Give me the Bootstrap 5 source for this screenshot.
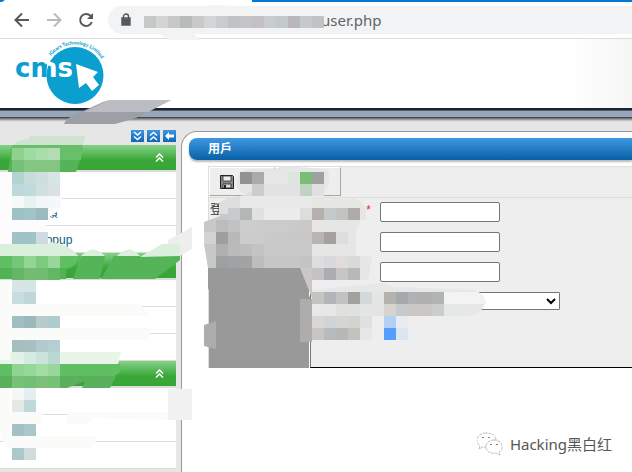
<!DOCTYPE html>
<html lang="zh-Hant">
<head>
<meta charset="utf-8">
<meta name="viewport" content="width=device-width, initial-scale=1">
<title>用戶</title>
<link href="https://cdn.jsdelivr.net/npm/bootstrap@5.3.0/dist/css/bootstrap.min.css" rel="stylesheet">
<style>
body{font:12px/16px "Liberation Sans","Noto Sans CJK TC",sans-serif;background:#e6e6e6;overflow:hidden}
svg{display:block}
.browser{height:39px;border-bottom:1px solid #dadce0;border-top:2px solid #0078d7;padding:4px 0 4px 12px;gap:12px}
.tool{border:0;background:none;padding:0;width:20px;height:20px;color:#55595e}
.tool:disabled{color:#b9bbbe}
.address{height:28px;background:#f1f3f4;border-radius:14px 0 0 14px;padding-left:12px;color:#5f6368}
.address-input{border:0;background:none;outline:0;padding:0 0 0 189px;font:15px/20px "Noto Sans",sans-serif;color:#5f6368;min-width:0}
.brandbar{height:69px;background:linear-gradient(90deg,#fff 90%,#f6f6f6);padding-left:14px}
.band{height:14px;background:linear-gradient(#1d252c 0 2px,#4f5d6d 2px 3px,#98a6bb 3px 9px,#46484b 9px 10px,#77797b 10px 11px,#999 11px 12px,#c0c0c0 12px 13px,#e0e0e0 13px)}
.side{width:176px;padding-top:8px}
.folds{gap:3px}
.fold{width:13px;height:12px;border:0;padding:0;background:linear-gradient(#3c96e2,#1265b5)}
.groups{margin-top:3px;background:#fff}
.group-head{display:flex;width:100%;height:27px;border:0;border-bottom:2px solid #dcdcdc;padding:8px 12px 0 0;background:linear-gradient(#85d18a,#3aa838 55%,#38a536) border-box}
.entry{display:block;height:27px;border-bottom:1px solid #dcdcdc;padding:6px 0 0 39px;color:#0b5e80;text-decoration:none}
.panel{margin:9px 0 0 5px;background:#fff;border:solid #999;border-width:1px 0 0 1px;border-radius:16px 0 0 0;padding:6px 0 0 7px;min-width:0}
.panel-title{height:22px;margin:0;border-radius:8px 0 0 8px;background:linear-gradient(#3f98e3,#0960a6);box-shadow:0 2px 2px #bbb;color:#fff;font:bold 12px/22px "Liberation Sans","Noto Sans CJK TC",sans-serif;padding-left:19px}
.work{margin:6px 0 0 19px;background:#eee;border-left:1px solid #ddd;border-top:1px solid #ddd}
.action{width:66px;height:29px;border:1px solid #fff;border-right-color:#aca899;border-bottom-color:#aca899;background:#eee;padding:0 0 0 9px}
.form-area{border-top:1px solid #ddd;margin-top:1px;height:171px}
.tabs-col{width:101px;background:#999;border-right:1px solid #fff}
.tab-item{height:24px;background:#eee;color:#333;padding:4px 0 0 1px}
.fields{border-left:1px solid #777;border-bottom:1px solid #000;padding:4px 0 0 1px}
.field-row{min-height:20px;margin-bottom:10px}
.field-row label{width:68px;text-align:right;padding-right:9px;color:#f22}
.text-field{width:120px;height:20px;border:1px solid #767676;border-radius:2px;background:#fff;padding:1px 4px}
.pick{width:180px;height:18px;border:1px solid #767676;border-radius:1px;background:#fff;font-size:12px;padding:0}
.redact{position:absolute;left:0;top:0;pointer-events:none}
.watermark{position:absolute;right:20px;bottom:16px;gap:7px;font:15px/24px "Noto Sans","Noto Sans CJK SC",sans-serif;color:#555}
</style>
<script src="https://cdn.jsdelivr.net/npm/bootstrap@5.3.0/dist/js/bootstrap.bundle.min.js"></script>
</head>
<body class="position-relative vh-100 d-flex flex-column">
<svg width="0" height="0" class="position-absolute" aria-hidden="true">
<symbol id="up" viewBox="0 0 9 9"><path d="M1 4.5 4.5 1 8 4.5M1 8.500 4.500 5 8 8.500" fill="none" stroke="#fff" stroke-width="1.500"/></symbol>
</svg>
<header class="browser d-flex align-items-center bg-white flex-shrink-0">
<button class="tool" aria-label="Back"><svg width="20" height="20" viewBox="0 0 20 20" fill="none" stroke="currentColor" stroke-width="2"><path d="M17 10H4M10 3.500 3.500 10l6.500 6.500"/></svg></button>
<button class="tool" aria-label="Forward" disabled><svg width="20" height="20" viewBox="0 0 20 20" fill="none" stroke="currentColor" stroke-width="2"><path d="M3 10h13M10 3.500 16.500 10 10 16.500"/></svg></button>
<button class="tool" aria-label="Reload"><svg width="20" height="20" viewBox="0 0 20 20" fill="none" stroke="currentColor" stroke-width="2"><path d="M15.800 12A6 6 0 1 1 14.500 5.800L16 7.500"/><path d="M17 3v6h-6z" fill="currentColor" stroke="none"/></svg></button>
<div class="address d-flex align-items-center flex-grow-1">
<svg width="12" height="14" viewBox="0 0 12 14"><path d="M2 5h8v7H2zM3.500 6V3.500a2.500 2.500 0 0 1 5 0V6" fill="none" stroke="#55595e" stroke-width="1.400"/><path d="M2 5.500h8V12H2z" fill="#55595e"/></svg>
<input class="address-input flex-grow-1" aria-label="Address" value="user.php">
</div>
</header>
<div class="brandbar flex-shrink-0">
<svg width="94" height="69" viewBox="14 39 94 69" role="img" aria-label="cms">
<defs><path id="arc" d="M51 56A31 31 0 0 1 105 67"/><linearGradient id="split" gradientUnits="userSpaceOnUse" x1="14" x2="74" y1="0" y2="0"><stop offset=".55" stop-color="#0b9fd0"/><stop offset=".55" stop-color="#fff"/></linearGradient></defs>
<circle cx="75" cy="75.500" r="28.500" fill="#0b9fd0"/>
<text x="15" y="77" font-family="DejaVu Sans,sans-serif" font-weight="700" font-size="26" fill="url(#split)">cms</text>
<path d="M76 64 98 72 93 77 99 85 92 91 86 83 79 88z" fill="#fff"/>
<text font-family="Lato,sans-serif" font-weight="900" font-size="5" fill="#0b9fd0"><textPath href="#arc">iGears Technology Limited</textPath></text>
</svg>
</div>
<div class="band flex-shrink-0"></div>
<div class="d-flex flex-grow-1">
<aside class="side flex-shrink-0">
<div class="folds d-flex justify-content-end">
<button class="fold" aria-label="Expand all"><svg width="13" height="12" viewBox="0 0 13 12" fill="none" stroke="#fff" stroke-width="1.500"><path d="M3 2l3.500 3L10 2M3 6.500l3.500 3 3.500-3"/></svg></button>
<button class="fold" aria-label="Collapse all"><svg width="13" height="12" viewBox="0 0 13 12" fill="none" stroke="#fff" stroke-width="1.500"><path d="M3 5.500l3.500-3 3.500 3M3 10l3.500-3L10 10"/></svg></button>
<button class="fold" aria-label="Hide menu"><svg width="13" height="12" viewBox="0 0 13 12"><path d="M2 6l4-4v2.500h5v3H6V10z" fill="#fff"/></svg></button>
</div>
<nav class="groups">
<button class="group-head justify-content-end" aria-label="Group 1"><svg width="9" height="9"><use href="#up"/></svg></button>
<a class="entry" href="#" aria-label="Entry"></a><a class="entry" href="#">&nbsp;&nbsp;類</a><a class="entry" href="#">popup</a>
<button class="group-head justify-content-end" aria-label="Group 2"></button>
<a class="entry" href="#" aria-label="Entry"></a><a class="entry" href="#" aria-label="Entry"></a><a class="entry" href="#" aria-label="Entry"></a>
<button class="group-head justify-content-end" aria-label="Group 3"><svg width="9" height="9"><use href="#up"/></svg></button>
<a class="entry" href="#" aria-label="Entry"></a><a class="entry" href="#" aria-label="Entry"></a><a class="entry" href="#" aria-label="Entry"></a>
</nav>
</aside>
<main class="panel flex-grow-1">
<h1 class="panel-title">用戶</h1>
<section class="work">
<div class="d-flex">
<button class="action text-start" aria-label="Save"><svg width="16" height="16" viewBox="0 0 16 16"><path d="M1.500 1.500h12l1 1v12h-13z" fill="#888" stroke="#222"/><path d="M4 2h8v5H4z" fill="#eee" stroke="#333" stroke-width=".8"/><path d="M4 10h8v4H4z" fill="#ddd" stroke="#222" stroke-width=".8"/><path d="M5 11h2v3H5z" fill="#222"/></svg></button>
<button class="action" aria-label="Save and close"></button>
</div>
<form class="form-area d-flex">
<div class="tabs-col flex-shrink-0"><div class="tab-item">登</div></div>
<div class="fields flex-grow-1">
<div class="field-row d-flex"><label for="f1">*</label><input id="f1" class="text-field"></div>
<div class="field-row d-flex"><label for="f2"></label><input id="f2" class="text-field" aria-label="Field 2"></div>
<div class="field-row d-flex"><label for="f3"></label><input id="f3" class="text-field" aria-label="Field 3"></div>
<div class="field-row d-flex"><label for="f4"></label><select id="f4" class="pick" aria-label="Field 4"><option></option></select></div>
</div>
</form>
</section>
</main>
</div>
<svg class="redact" width="632" height="472" viewBox="0 0 632 472" aria-hidden="true">
<path d="M0 0h252v2H0z" fill="#fff"/><path d="M0 0h5L2 2H0z" fill="#0078d7"/>
<path d="M141 18q0-9 9-10l70-3 50 3 45 1 7 7v12l-9 5h-120l7 7h-30l-20-11q-9-3-9-11z" fill="#f2f4f4"/>
<g id="url"></g>
<path d="M64 124q2-5 8-8l31-14 7-2h61l-35 18-21 6z" fill="#9d9fa7"/><path d="M84 112l25-12h62l-23 12z" fill="#bcbdc2"/>
<path d="M29 136h56l-2 12H12q3-9 17-9z" fill="#cfe3d0"/>
<path d="M12 145h71l-2 12-5 15H8z" fill="#55b457"/><path d="M12 145h71l-2 15H11z" fill="#67c069"/>
<path d="M0 172h62v30l-2 8-12 8-4 16 6 6v4H0z" fill="#fbfcfb"/>
<path d="M0 256h80q-2 8-6 10l-8 4v9H0z" fill="#4fb351"/><path d="M0 256h79q-3 12-14 12H0z" fill="#60be63"/>
<path d="M81 256h24l-5 23H73zM114 256h66v4l-25 19h-54z" fill="#55b358"/>
<path d="M0 244h48l2-2q20 2 28 14H0zM81 256q12-13 24 0zM117 256q12-13 23 0zM140 257l22-13h18v12l-40 1z" fill="#dbf0dc"/><path d="M168 240l24-13v22l-12 7v-12h-12z" fill="#eee"/>
<path d="M0 364h120q4 8-6 12H0z" fill="#60be63"/><path d="M0 376h116l-6 12H82l3-7-18 7H0z" fill="#5ab05b"/>
<path d="M0 360l10-8h111l-3 12H0z" fill="#e8f5e8"/>
<path d="M0 280h10v80H0zM0 304h140l10 12H0zM0 328h152l-4 12H0zM0 388h10v60L0 430zM0 412h44l-4 12H0zM68 412h100v8L92 418l-4 6H66zM0 436h98l-5 12H8z" fill="#fbfbfa"/>
<path d="M168 389h24v31h-24z" fill="#f1f1f1"/>
<path d="M237 182q0-12 14-13h22l12-3 40 3q5 1 4 13t-15 13h-56q-20 1-21-11z" fill="#e5e6e5"/>
<path d="M219 204q5-7 21-8l12-4h60v28h-93z" fill="#dededf"/><path d="M240 196h72v12h-72z" fill="#e9e9e9"/>
<path d="M204 222l16-6v-2h92v84l-12-30h-92l-4-24z" fill="#c8c8c8"/>
<path d="M208 268h92l10 30v20h-90l-12-30z" fill="#999"/>
<path d="M312 198q8-4 16 2 10-6 18 0 14-6 20 10v10h-6l-4 12v24h16l-4 24h-56z" fill="#e6e6e5"/>
<path d="M204 325l12-4v28l-12-3zM300 299h12v43h-12z" fill="#adadad"/>
<path d="M312 290l60-6q10-3 20 3l82 3q10 3 11 12-2 13-20 14H372v24H312z" fill="#e6e7e7"/>
<path d="M444 292h34q8 3 8 12h-42z" fill="#f3f3f3"/>
<g id="tiles"></g>
</svg>
<div class="watermark d-flex align-items-center"><svg width="26" height="24" viewBox="0 0 26 24" fill="#fff" stroke="#aaa" stroke-width=".8" stroke-dasharray="3 1"><path d="M9 1C4 1 0 4 0 8c0 3 1 4 3 6l-1 3 4-2h5c5 0 8-3 8-7s-4-7-10-7z"/><path d="M17 8c-5 0-8 3-8 7s4 7 9 6l5 2-1-3c2-1 3-3 3-5 0-4-3-7-8-7z"/><path d="M6 5v1M12 5v1M14 12v1M20 12v1" stroke="#555" stroke-width="1.500"/></svg><span>Hacking黑白红</span></div>
<script>
/* Each entry is a left edge, a top edge and a run of 12px cell colours. */
const address = [
[144,16,"c6c7c8 d3d5d5 c7c7c7 b9babb c9c9ca d4d5d6 c8cccd c0c3c5 c5c4c6 c3c1c3 c9cccd c3c8ca bbb6b9 c5c9cb c2c2c3"]
];
const menu = [
[12,148,"8fd28f 9edba0 a9dda9 b5ddb4"],[12,160,"77c078 82c783 85c582 86c482"],
[12,172,"b4d2cf c8dcda cfdfdf d7e5e4"],[12,184,"bfd8dc bfdbdc cfe1df d9e1e1"],
[12,196,"f5f9f9 e8f2f0 f1f7f6 f5f8f9"],[12,208,"9dc1c5 a1c4c7 9cbabd"],[12,232,"a2c3c6 9ec3c8 cedce1"],
[12,256,"76c67a 94d596 7dca7f 98d798"],[12,268,"64b564 74bb74 70bc70 62b862"],
[12,280,"d7e5e6 d6e5e6"],[12,292,"c7dde1 bed7d9"],[12,316,"a0bfc2 99b9bc b7cbca aecdcf"],[12,340,"a5bfc1 a9bfc2 b2cace b6ced3"],
[12,352,"e3f1e9 d6e9e3 cce2dd b9d8d2"],[12,364,"8fd493 95d898 a2dda2 99d69c"],[12,376,"77c179 74bd75 7cc07b 77c179"],
[12,388,"f5f7f7 e5eef1"],[12,400,"e5e9e4 bfd9db"],[12,424,"a4c1c4 abc7ca"],[12,448,"acc8cb d0dddc"]
];
const panel = [
[252,172,"aaaaaa e6e7e6 e6e7e6 dce6dc 78bf75 c6c4c3"],[240,172,"929292"],[312,172,"9ea19f"],[252,184,"cccccc e2e2e2 e2e2e2 e2e2e2 c0d2c0 e0e0e0"],
[228,208,"c6cbcd b1b7b6 e1e1e1 ececec ececec ececec dddddd b5b0ad c4c9cc c3c4be aeabaa"],
[216,220,"bcbcbc c2c2c2 cdcdcd cccccc cbcbcb cbcbcb cacaca c9c9c9"],
[204,232,"d3d2d2 9d9e9e b9b9b9 cccccc cccccc cacaca c9c9c9 c8c8c8 c8c8c8 b9b4b1 a5a0a2 dcdddf"],
[216,244,"b0b0b0 b9babb bdbdbd c3c3c3 c9c9c9 c9c9c9 c9c9c9 c9c9c9"],
[216,256,"9da0a1 a0a2a4 a3a3a4 bdbdbd c6c6c6 c6c6c6 c6c6c6 c4c4c4 dedede d7d9da e0dcda d9dada"],
[312,268,"c7c2bf abadb2 c8c6c4 b9b9b8"],
[312,292,"c4c4c1 b1b4b9 c3c1c4 a1a29d d3d8d8 e5e5e5 b5b2ab a5a9ac b1b1b1 b0b0b0 b1b3b4"],
[312,304,"e8e8e6 e7e7e7 e0e0df dee2e1 e5e5e5 e4e4e4 d6d3d1 c8c9cb c9c8c7 c9c7c5 c9cdcb"],
[312,316,"d9d7d5 d1d4d5 d7d6d3 d4d3d0 dfe0e2"],[312,328,"c9c5c2 b5bcbd b7b7b4 c2c2bf"],
[384,316,"b3cff1 e8ebef"],[384,328,"529fff dce6f1"]
];
function paint(id, rows){
  const g = document.getElementById(id);
  for (const [x,y,run] of rows) run.split(" ").forEach((c,i) => {
    const r = document.createElementNS("http://www.w3.org/2000/svg","rect");
    r.setAttribute("x",x+i*12); r.setAttribute("y",y);
    r.setAttribute("width",12); r.setAttribute("height",12); r.setAttribute("fill","#"+c);
    g.append(r);
  });
}
paint("url", address); paint("tiles", menu); paint("tiles", panel);
</script>
</body>
</html>
